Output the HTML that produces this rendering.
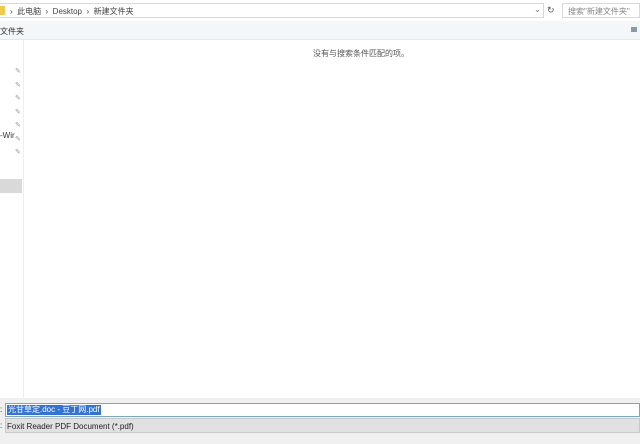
<!DOCTYPE html>
<html><head><meta charset="utf-8"><style>
body{margin:0;width:640px;height:444px;overflow:hidden;background:#fff;font-family:"Liberation Sans","Noto Sans CJK SC",sans-serif;font-size:8px;color:#222;position:relative}
.a{position:absolute}
</style></head><body>
<div class="a" style="left:0;top:0;width:640px;height:20px;background:#fff"></div>
<div class="a" style="left:0;top:3px;width:544px;height:15px;border:1px solid #d9d9d9;border-left:none;box-sizing:border-box"></div>
<div class="a" style="left:0;top:6px;width:5px;height:9px;background:#f2c94c"></div>
<div class="a" style="left:10px;top:6px;color:#444">›&nbsp; 此电脑 &nbsp;› &nbsp;Desktop &nbsp;› &nbsp;新建文件夹</div>
<div class="a" style="left:534px;top:5px;color:#777">⌄</div>
<div class="a" style="left:547px;top:5px;color:#555;font-size:9px">↻</div>
<div class="a" style="left:562px;top:3px;width:78px;height:15px;border:1px solid #d9d9d9;box-sizing:border-box"></div>
<div class="a" style="left:568px;top:6px;color:#888">搜索"新建文件夹"</div>
<div class="a" style="left:0;top:21px;width:640px;height:18px;background:#f5f6f7;border-bottom:1px solid #e8e8e8"></div>
<div class="a" style="left:0;top:26px;color:#333">文件夹</div>
<div class="a" style="left:631px;top:27px;width:6px;height:5px;background:#8a9aa8"></div>
<div class="a" style="left:23px;top:40px;width:1px;height:358px;background:#eee"></div>
<div class="a" style="left:313px;top:48px;color:#555">没有与搜索条件匹配的项。</div>
<div class="a" style="left:15px;top:65px;color:#999;line-height:13.5px;font-size:7px">✎<br>✎<br>✎<br>✎<br>✎<br>✎<br>✎</div>
<div class="a" style="left:0;top:131px;color:#333">-Wir</div>
<div class="a" style="left:0;top:179px;width:22px;height:14px;background:#d9d9d9"></div>
<div class="a" style="left:0;top:398px;width:640px;height:46px;background:#f0f0f0"></div>
<div class="a" style="left:0;top:405px">:</div>
<div class="a" style="left:5px;top:403px;width:635px;height:14px;background:#fff;border:1px solid #7fa5b8;box-sizing:border-box"></div>
<div class="a" style="left:7px;top:405px;background:#3373d4;color:#fff;padding:0 1px;line-height:10px">光甘草定.doc - 豆丁网.pdf</div>
<div class="a" style="left:0;top:421px">:</div>
<div class="a" style="left:5px;top:418px;width:635px;height:15px;background:#e1e1e1;border:1px solid #c8c8c8;box-sizing:border-box"></div>
<div class="a" style="left:7px;top:422px;color:#222">Foxit Reader PDF Document (*.pdf)</div>
</body></html>
